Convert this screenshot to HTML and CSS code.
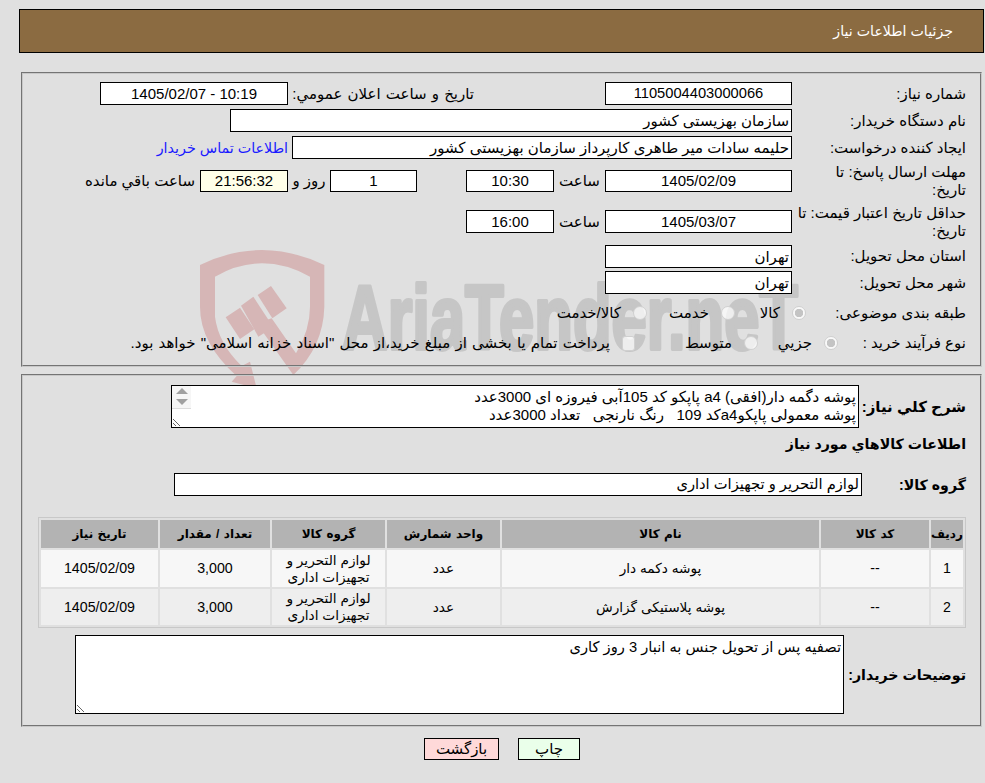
FILE: index.html
```html
<!DOCTYPE html>
<html lang="fa" dir="rtl">
<head>
<meta charset="utf-8">
<title>جزئیات اطلاعات نیاز</title>
<link rel="stylesheet" href="styles.css">
</head>
<body>
<svg class="watermark" viewBox="0 0 985 783" aria-hidden="true">
  <g transform="translate(190 240) scale(.33333)" class="wm-shield">
    <path d="M30 75Q215 -15 403 75L403 200Q400 320 310 405L200 250L245 235L318 340Q360 270 360 200L360 110Q215 30 75 110L75 230Q85 310 155 378L180 365L200 445L125 425L140 408Q30 310 30 200Z"/>
    <polygon points="107,232 150,203 193,268 150,297"/>
    <polygon points="153,197 190,170 250,262 205,290"/>
    <polygon points="203,165 243,138 290,205 247,235"/>
  </g>
  <text class="wm-text" x="342" y="349" textLength="456" lengthAdjust="spacingAndGlyphs" direction="ltr">AriaTender.neT</text>
</svg>
<div class="page">
  <header class="title-bar">جزئیات اطلاعات نیاز</header>

  <section class="panel panel-top">
    <div class="row">
      <div class="lbl">شماره نیاز:</div>
      <div class="box w187 center long-num">1105004403000066</div>
      <div class="side-label">تاریخ و ساعت اعلان عمومي:</div>
      <div class="box w188 center">10:19 - 1405/02/07</div>
    </div>
    <div class="row">
      <div class="lbl">نام دستگاه خریدار:</div>
      <div class="box w562">سازمان بهزیستی کشور</div>
    </div>
    <div class="row">
      <div class="lbl">ایجاد کننده درخواست:</div>
      <div class="box w500">حلیمه سادات میر طاهری کارپرداز سازمان بهزیستی کشور</div>
      <a class="contact" href="#">اطلاعات تماس خریدار</a>
    </div>
    <div class="row row-send">
      <div class="lbl">مهلت ارسال پاسخ: تا<br>تاریخ:</div>
      <div class="box w187 center short">1405/02/09</div>
      <div class="hour">ساعت</div>
      <div class="box w88 center short">10:30</div>
      <div class="box w87 center short day">1</div>
      <div class="days">روز و</div>
      <div class="box w88 center short timer">21:56:32</div>
      <div class="remain">ساعت باقي مانده</div>
    </div>
    <div class="row row-valid">
      <div class="lbl">حداقل تاریخ اعتبار قیمت: تا<br>تاریخ:</div>
      <div class="box w187 center">1405/03/07</div>
      <div class="hour">ساعت</div>
      <div class="box w88 center">16:00</div>
    </div>
    <div class="row row-prov">
      <div class="lbl">استان محل تحویل:</div>
      <div class="box w187">تهران</div>
    </div>
    <div class="row row-city">
      <div class="lbl">شهر محل تحویل:</div>
      <div class="box w187">تهران</div>
    </div>
    <div class="row row-cat">
      <div class="lbl">طبقه بندی موضوعی:</div>
      <label class="opt cat-1"><input type="radio" name="c" checked disabled><span>کالا</span></label>
      <label class="opt cat-2"><input type="radio" name="c" disabled><span>خدمت</span></label>
      <label class="opt cat-3"><input type="radio" name="c" disabled><span>کالا/خدمت</span></label>
    </div>
    <div class="row row-proc">
      <div class="lbl">نوع فرآیند خرید :</div>
      <label class="opt proc-1"><input type="radio" name="p" checked disabled><span>جزيي</span></label>
      <label class="opt proc-2"><input type="radio" name="p" disabled><span>متوسط</span></label>
      <label class="opt proc-3"><input type="checkbox" disabled><span>پرداخت تمام یا بخشی از مبلغ خرید،از محل "اسناد خزانه اسلامی" خواهد بود.</span></label>
    </div>
  </section>

  <section class="panel panel-bottom">
    <div class="row row-desc">
      <div class="lbl-strong lbl-desc">شرح کلي نياز:</div>
      <div class="area-wrap">
        <textarea class="area area-desc" readonly>پوشه دگمه دار(افقی) a4 پاپکو کد 105آبی فیروزه ای 3000عدد
پوشه معمولی پاپکوa4کد 109   رنگ نارنجی   تعداد 3000عدد</textarea>
        <div class="scroll-arrows" aria-hidden="true"><span class="arrow-up"></span><span class="arrow-down"></span></div>
      </div>
    </div>
    <h2 class="goods-title">اطلاعات کالاهاي مورد نياز</h2>
    <div class="row row-group">
      <div class="lbl-strong lbl-group">گروه کالا:</div>
      <div class="box w688">لوازم التحریر و تجهیزات اداری</div>
    </div>
    <table class="goods">
      <colgroup>
        <col class="c1"><col class="c2"><col class="c3"><col class="c4"><col class="c5"><col class="c6"><col class="c7">
      </colgroup>
      <thead>
        <tr><th>ردیف</th><th>کد کالا</th><th>نام کالا</th><th>واحد شمارش</th><th>گروه کالا</th><th>تعداد / مقدار</th><th>تاریخ نیاز</th></tr>
      </thead>
      <tbody>
        <tr class="odd"><td class="num">1</td><td class="num">--</td><td>پوشه دکمه دار</td><td>عدد</td><td>لوازم التحریر و<br>تجهیزات اداری</td><td class="num">3,000</td><td class="num">1405/02/09</td></tr>
        <tr class="even"><td class="num">2</td><td class="num">--</td><td>پوشه پلاستیکی گزارش</td><td>عدد</td><td>لوازم التحریر و<br>تجهیزات اداری</td><td class="num">3,000</td><td class="num">1405/02/09</td></tr>
      </tbody>
    </table>
    <div class="row row-notes">
      <div class="lbl-strong lbl-notes">توضیحات خریدار:</div>
      <textarea class="area area-notes" readonly>تصفیه پس از تحویل جنس به انبار 3 روز کاری</textarea>
    </div>
  </section>

  <div class="actions">
    <button class="btn btn-print" type="button">چاپ</button>
    <button class="btn btn-back" type="button">بازگشت</button>
  </div>
</div>
</body>
</html>
```
FILE: styles.css
```css
* { box-sizing: border-box; }
html, body { margin: 0; padding: 0; }
body {
  background: #e0e0e0;
  color: #000;
  font-family: "Liberation Sans", "DejaVu Sans", sans-serif;
  font-size: 15px;
  height: 783px;
  overflow: hidden;
  position: relative;
}
.watermark { position: absolute; left: 0; top: 0; width: 985px; height: 783px; }
.wm-shield { fill: #d6b6b6; }
.wm-text {
  fill: #c6c6c6;
  stroke: #c6c6c6;
  stroke-width: 4px;
  stroke-linejoin: round;
  font-family: "Liberation Sans", sans-serif;
  font-weight: 700;
  font-size: 90px;
}
.page { position: relative; padding: 9px 0 0 19px; }
.title-bar {
  height: 44px;
  background: #8b6b41;
  border: 1px solid #000;
  color: #fff;
  font-size: 14.2px;
  line-height: 42px;
  padding-right: 30px;
  margin-right: 1px;
}
.panel { border: 2px groove #c8c8c8; margin: 0 3px 0 2px; padding-right: 14px; padding-left: 15px; }
.panel-top { margin-top: 19px; height: 295px; padding-top: 6px; }
.panel-bottom { margin-top: 7px; height: 353px; padding-top: 9px; }
.row { display: flex; align-items: center; height: 27px; }
.lbl { width: 174px; line-height: 18px; flex: none; white-space: nowrap; }
.box {
  height: 23px;
  background: #fff;
  border: 1px solid #000;
  line-height: 21px;
  padding: 0 2px;
  flex: none;
  white-space: nowrap;
}
.center { text-align: center; }
.long-num { font-size: 14.7px; }
.short { height: 22px; line-height: 20px; }
.w87 { width: 87px; }
.w88 { width: 88px; }
.w187 { width: 187px; }
.w188 { width: 188px; }
.w500 { width: 500px; }
.w562 { width: 562px; }
.w688 { width: 688px; font-size: 14.7px; }
.side-label { width: 317px; padding-right: 131px; white-space: nowrap; word-spacing: 1px; }
.contact { color: #1a1aff; text-decoration: none; margin-right: 4px; white-space: nowrap; font-size: 14.3px; }
.hour { width: 51px; text-align: center; }
.day { margin-right: 49px; }
.days { width: 42px; text-align: center; }
.timer { background: #ffffe8; }
.remain { margin-right: 5px; white-space: nowrap; }
.row-send { height: 40px; }
.row-valid { height: 41px; }
.row-prov { height: 28px; }
.row-city { height: 25px; }
.row-cat { height: 36px; }
.row-proc { height: 24px; }
.opt { display: flex; align-items: center; white-space: nowrap; flex: none; }
.opt input {
  appearance: none;
  -webkit-appearance: none;
  width: 14px;
  height: 14px;
  margin: 0;
  flex: none;
  border: 1px solid #d0d0d0;
  border-radius: 50%;
  background: rgba(255, 255, 255, .7);
}
.opt input[type="radio"]:checked {
  background: radial-gradient(circle, #c4c4c4 0 4px, rgba(255, 255, 255, .8) 4.5px);
}
.opt input[type="checkbox"] { width: 13px; height: 15px; border-radius: 3px; }
.opt span { margin-right: 12px; }
.cat-1 { width: 71px; margin-right: -14px; }
.cat-2 { width: 88px; }
.cat-3 { width: 120px; }
.proc-1 { width: 80px; margin-right: -46px; }
.proc-2 { width: 123px; }
.proc-3 { width: 505px; word-spacing: 1px; }
.lbl-strong { font-weight: 700; flex: none; font-size: 14.2px; }
.lbl-desc { width: 107px; font-size: 15px; }
.lbl-group { width: 104px; }
.lbl-notes { width: 122px; }
.row-desc { height: 43px; }
.area-wrap { position: relative; flex: none; }
.area {
  display: block;
  border: 1px solid #000;
  background: #fff;
  color: #000;
  font: inherit;
  line-height: 18px;
  padding: 2px 2px 0;
  margin: 0;
  flex: none;
  outline: 0;
}
.area-desc { width: 688px; height: 43px; overflow: hidden; }
.scroll-arrows {
  position: absolute;
  left: 1px;
  top: 1px;
  width: 19px;
  height: 23px;
  background: #f6f6f6;
  border-bottom: 1px solid #dcdcdc;
  display: flex;
  flex-direction: column;
  align-items: center;
  gap: 5px;
  padding-top: 2px;
}
.arrow-up, .arrow-down { width: 0; height: 0; border-left: 6px solid transparent; border-right: 6px solid transparent; }
.arrow-up { border-bottom: 6px solid #a0a0a0; }
.arrow-down { border-top: 6px solid #a0a0a0; }
.area-notes { width: 769px; height: 79px; font-size: 14.7px; }
.goods-title { font-size: 14.2px; font-weight: 700; margin: 0; height: 45px; line-height: 32px; }
.row-group { height: 23px; }
.goods {
  table-layout: fixed;
  width: 928px;
  margin: 21px 0 0 0;
  border: 1px solid #c8c8c8;
  border-spacing: 2px;
  border-collapse: separate;
  text-align: center;
}
.c1 { width: 32px; }
.c2 { width: 108px; }
.c3 { width: 317px; }
.c4 { width: 113px; }
.c5 { width: 113px; }
.c6 { width: 110px; }
.c7 { width: 117px; }
.goods th { background: #b3b3b3; height: 28px; padding: 0; font-size: 12px; font-weight: 700; word-spacing: 1px; }
.goods td { padding: 0; line-height: 17px; font-size: 13.7px; }
.goods td.num { font-size: 14.2px; }
.odd td { background: #f7f7f7; height: 37px; }
.even td { background: #eee; height: 36px; }
.row-notes { margin-top: 7px; height: 79px; }
.actions { display: flex; justify-content: center; gap: 19px; margin-top: 11px; }
.btn {
  height: 22px;
  border: 1px solid #000;
  border-radius: 0;
  font: inherit;
  color: #000;
  padding: 0;
}
.btn-print { width: 62px; background: #eaffea; }
.btn-back { width: 75px; background: #ffd9d9; }
```
